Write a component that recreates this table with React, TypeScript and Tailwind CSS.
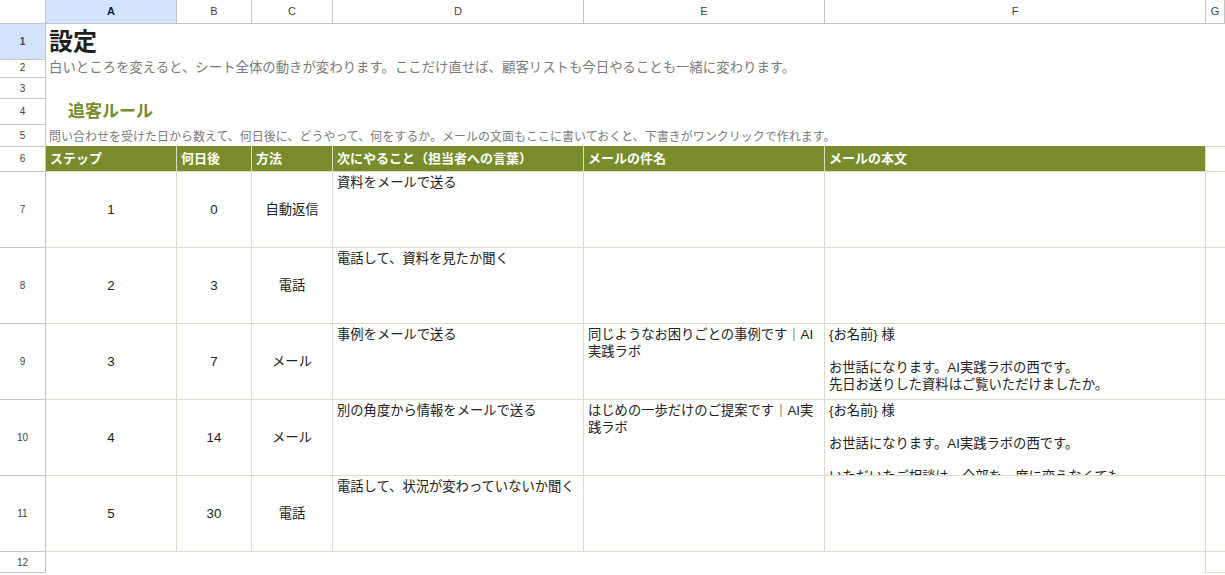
import React from 'react';

const grid = 'grid grid-cols-[46px_131px_75px_81px_251px_241px_381px_minmax(0,1fr)]';
const font = { fontFamily: '"Liberation Sans", "Noto Sans CJK JP", sans-serif' };

const letters = ['A', 'B', 'C', 'D', 'E', 'F', 'G'];

const headers = ['ステップ', '何日後', '方法', '次にやること（担当者への言葉）', 'メールの件名', 'メールの本文'];

const steps = [
    { step: '1', days: '0', method: '自動返信', next: '資料をメールで送る', subject: '', body: '' },
    { step: '2', days: '3', method: '電話', next: '電話して、資料を見たか聞く', subject: '', body: '' },
    {
        step: '3',
        days: '7',
        method: 'メール',
        next: '事例をメールで送る',
        subject: '同じようなお困りごとの事例です｜AI\n実践ラボ',
        body: '{お名前} 様\n\nお世話になります。AI実践ラボの西です。\n先日お送りした資料はご覧いただけましたか。\n\n似たようなお悩みをお持ちの方の事例をお送りします。',
    },
    {
        step: '4',
        days: '14',
        method: 'メール',
        next: '別の角度から情報をメールで送る',
        subject: 'はじめの一歩だけのご提案です｜AI実\n践ラボ',
        body: '{お名前} 様\n\nお世話になります。AI実践ラボの西です。\n\nいただいたご相談は、全部を一度に変えなくても',
    },
    { step: '5', days: '30', method: '電話', next: '電話して、状況が変わっていないか聞く', subject: '', body: '' },
];

const rowNum = 'flex items-center justify-center border-r border-b border-[#c4c7c5] text-[10px] text-[#444]';
const cellLine = 'border-r border-b border-[#dcdccb]';
const textCell = `${cellLine} overflow-hidden px-[4px] pt-[3px] text-[13.3px] leading-[16.6px] whitespace-pre-wrap`;
const numCell = `${cellLine} flex items-center justify-center text-[13.3px]`;

export default function App() {
    return (
        <div className="w-[1225px] h-[575px] overflow-hidden bg-white text-[#222]" style={font}>
            {/* column letters */}
            <div className={`${grid} h-[24px]`}>
                <div className="border-r border-b border-[#c4c7c5]" />
                {letters.map((l, i) => (
                    <div
                        key={l}
                        className={`flex items-center justify-center border-r border-b border-[#c4c7c5] text-[11px] ${
                            i === 0 ? 'bg-[#d3e3fd] font-semibold text-[#0b1f44]' : 'text-[#444]'
                        }`}
                    >
                        {l}
                    </div>
                ))}
            </div>

            {/* rows 1-5 */}
            <div className={`${grid} h-[33px]`}>
                <div className={`${rowNum} bg-[#d3e3fd] font-semibold text-[#0b1f44]`}>1</div>
                <div className="col-span-7 flex items-center pl-[3px] text-[24px] font-bold text-[#1f1f1f] whitespace-nowrap">設定</div>
            </div>
            <div className={`${grid} h-[21px]`}>
                <div className={rowNum}>2</div>
                <div className="col-span-7 flex items-center pl-[3px] pt-[1px] text-[13.4px] text-[#7b7b7b] whitespace-nowrap">
                    白いところを変えると、シート全体の動きが変わります。ここだけ直せば、顧客リストも今日やることも一緒に変わります。
                </div>
            </div>
            <div className={`${grid} h-[21px]`}>
                <div className={rowNum}>3</div>
                <div className="col-span-7" />
            </div>
            <div className={`${grid} h-[26px]`}>
                <div className={rowNum}>4</div>
                <div className="col-span-7 flex items-center pl-[22px] text-[17px] font-bold text-[#7a8b2b] whitespace-nowrap">追客ルール</div>
            </div>
            <div className={`${grid} h-[21px]`}>
                <div className={rowNum}>5</div>
                <div className="col-span-7 flex items-center pl-[3px] pt-[3px] text-[12px] text-[#7b7b7b] whitespace-nowrap border-b border-[#dcdccb]">
                    問い合わせを受けた日から数えて、何日後に、どうやって、何をするか。メールの文面もここに書いておくと、下書きがワンクリックで作れます。
                </div>
            </div>

            {/* table header */}
            <div className={`${grid} h-[26px]`}>
                <div className={rowNum}>6</div>
                {headers.map((h) => (
                    <div key={h} className={`${cellLine} bg-[#7a8b2b] flex items-center pl-[4px] text-[13px] font-bold text-white whitespace-nowrap overflow-hidden`}>
                        {h}
                    </div>
                ))}
                <div className="border-b border-[#dcdccb]" />
            </div>

            {/* table rows */}
            {steps.map((s, i) => (
                <div key={s.step} className={`${grid} h-[76px]`}>
                    <div className={rowNum}>{7 + i}</div>
                    <div className={numCell}>{s.step}</div>
                    <div className={numCell}>{s.days}</div>
                    <div className={numCell}>{s.method}</div>
                    <div className={textCell}>{s.next}</div>
                    <div className={textCell}>{s.subject}</div>
                    <div className={textCell}>{s.body}</div>
                    <div className="border-b border-[#dcdccb]" />
                </div>
            ))}

            {/* row 12 */}
            <div className={`${grid} h-[21px]`}>
                <div className={rowNum}>12</div>
                <div className="col-span-5" />
                <div className="border-r border-[#dcdccb]" />
                <div className="border-b border-[#dcdccb]" />
            </div>
        </div>
    );
}
